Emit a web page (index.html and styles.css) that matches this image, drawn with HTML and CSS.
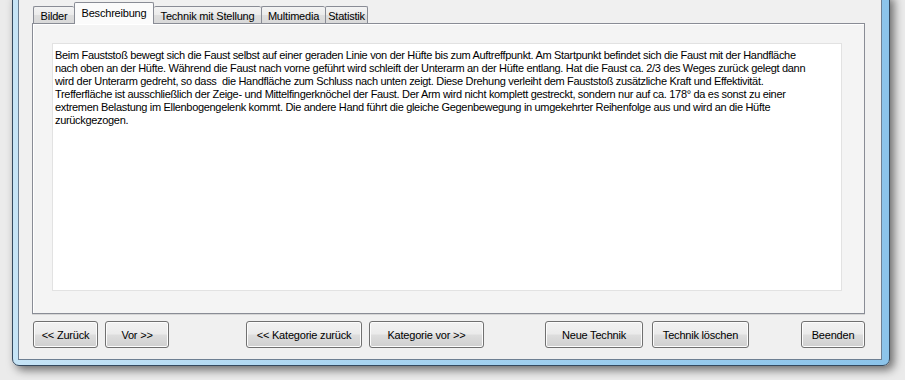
FILE: index.html
```html
<!DOCTYPE html>
<html lang="de">
<head>
  <meta charset="UTF-8">
  <title>Technik - Beschreibung</title>
  <link rel="stylesheet" href="styles.css">
</head>
<body>

  <div class="window">
    <div class="client">

      <!-- Tab strip -->
      <div class="tabstrip">
        <div class="tab tab-bilder">Bilder</div>
        <div class="tab tab-beschreibung selected">Beschreibung</div>
        <div class="tab tab-technik">Technik mit Stellung</div>
        <div class="tab tab-multimedia">Multimedia</div>
        <div class="tab tab-statistik">Statistik</div>
      </div>

      <!-- Tab page -->
      <div class="tabpage">
        <div class="textbox">Beim Fauststoß bewegt sich die Faust selbst auf einer geraden Linie von der Hüfte bis zum Auftreffpunkt. Am Startpunkt befindet sich die Faust mit der Handfläche
nach oben an der Hüfte. Während die Faust nach vorne geführt wird schleift der Unterarm an der Hüfte entlang. Hat die Faust ca. 2/3 des Weges zurück gelegt dann
wird der Unterarm gedreht, so dass  die Handfläche zum Schluss nach unten zeigt. Diese Drehung verleiht dem Fauststoß zusätzliche Kraft und Effektivität.
Trefferfläche ist ausschließlich der Zeige- und Mittelfingerknöchel der Faust. Der Arm wird nicht komplett gestreckt, sondern nur auf ca. 178° da es sonst zu einer
extremen Belastung im Ellenbogengelenk kommt. Die andere Hand führt die gleiche Gegenbewegung in umgekehrter Reihenfolge aus und wird an die Hüfte
zurückgezogen.</div>
      </div>

      <!-- Buttons -->
      <div class="buttons">
        <button class="btn btn-zurueck">&lt;&lt; Zurück</button>
        <button class="btn btn-vor">Vor &gt;&gt;</button>
        <button class="btn btn-kat-zurueck">&lt;&lt; Kategorie zurück</button>
        <button class="btn btn-kat-vor">Kategorie vor &gt;&gt;</button>
        <button class="btn btn-neu">Neue Technik</button>
        <button class="btn btn-loeschen">Technik löschen</button>
        <button class="btn btn-beenden">Beenden</button>
      </div>

    </div>
  </div>

</body>
</html>
```

FILE: styles.css
```css
html, body {
  margin: 0;
  padding: 0;
  height: 380px;
  overflow: hidden;
}

body {
  background: #ebebeb;
  font-family: "Liberation Sans", Arial, sans-serif;
  font-size: 11px;
  color: #000;
}

/* Aero window frame */
.window {
  margin-top: -6px;
  margin-left: 12px;
  width: 866px;
  padding: 5px;
  border: 1px solid #34495e;
  border-radius: 0 0 7px 7px;
  background: linear-gradient(to right, #c6e4f6, #a8d4f0 40%, #8cc4ea);
  box-shadow: 4px 4px 10px rgba(0, 0, 0, 0.55);
}

.client {
  width: 862px;
  height: 359px;
  border: 1px solid #6d7f92;
  border-top: none;
  background: #f0f0f0;
}

/* Tabs */
.tabstrip {
  display: flex;
  align-items: flex-end;
  height: 23px;
  padding-left: 14px;
}

.tab {
  box-sizing: border-box;
  height: 17px;
  padding-top: 3px;
  border: 1px solid #898c95;
  border-bottom: none;
  border-right: none;
  border-radius: 2px 2px 0 0;
  background: linear-gradient(to bottom, #f3f3f3, #ebebeb 50%, #dedede 51%, #d9d9d9);
  text-align: center;
  white-space: nowrap;
  letter-spacing: -0.2px;
}

.tab-statistik {
  border-right: 1px solid #898c95;
}

.tab.selected {
  position: relative;
  z-index: 1;
  height: 22px;
  margin-bottom: -1px;
  padding-top: 4px;
  border-right: 1px solid #898c95;
  background: #fbfbfb;
}

.tab-bilder { width: 41px; }
.tab-beschreibung { width: 80px; }
.tab-technik { width: 107px; border-left: none; }
.tab-multimedia { width: 64px; }
.tab-statistik { width: 43px; }

/* Tab page */
.tabpage {
  box-sizing: border-box;
  margin-left: 13px;
  width: 833px;
  height: 291px;
  padding: 19px 0 0 19px;
  border: 1px solid #898c95;
  background: #f4f4f4;
  box-shadow: inset 1px 1px 0 #fff, 0 1px 0 #d6d6d6;
}

.textbox {
  box-sizing: border-box;
  width: 790px;
  height: 248px;
  padding: 5px 2px;
  border: 1px solid #e2e2e2;
  background: #fff;
  line-height: 13px;
  letter-spacing: -0.32px;
  white-space: pre;
  overflow: hidden;
}

/* Buttons */
.buttons {
  display: flex;
  margin-top: 7px;
  padding-left: 14px;
}

.btn {
  box-sizing: border-box;
  height: 27px;
  padding: 0;
  border: 1px solid #707070;
  border-radius: 3px;
  background: linear-gradient(to bottom, #f2f2f2, #ebebeb 48%, #dddddd 52%, #cfcfcf);
  box-shadow: inset 0 0 0 1px #fcfcfc;
  font-family: inherit;
  font-size: 11px;
  letter-spacing: -0.2px;
  color: #000;
}

.btn-zurueck { width: 65px; }
.btn-vor { width: 64px; margin-left: 7px; }
.btn-kat-zurueck { width: 116px; margin-left: 77px; }
.btn-kat-vor { width: 115px; margin-left: 7px; }
.btn-neu { width: 98px; margin-left: 61px; }
.btn-loeschen { width: 97px; margin-left: 9px; }
.btn-beenden { width: 64px; margin-left: 52px; }
```
